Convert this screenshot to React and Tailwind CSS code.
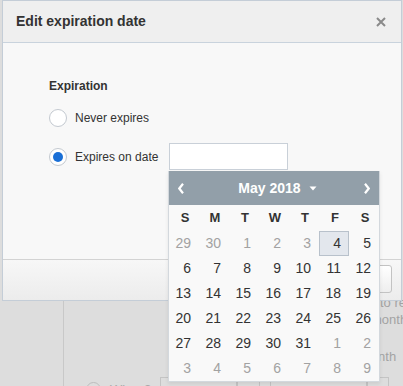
import React from "react";

const weeks = [
  [[29, 0], [30, 0], [1, 0], [2, 0], [3, 0], [4, 2], [5, 1]],
  [[6, 1], [7, 1], [8, 1], [9, 1], [10, 1], [11, 1], [12, 1]],
  [[13, 1], [14, 1], [15, 1], [16, 1], [17, 1], [18, 1], [19, 1]],
  [[20, 1], [21, 1], [22, 1], [23, 1], [24, 1], [25, 1], [26, 1]],
  [[27, 1], [28, 1], [29, 1], [30, 1], [31, 1], [1, 0], [2, 0]],
  [[3, 0], [4, 0], [5, 0], [6, 0], [7, 0], [8, 0], [9, 0]],
];

const dayNames = ["S", "M", "T", "W", "T", "F", "S"];

function Radio({ checked }) {
  return (
    <span className="w-[18px] h-[18px] shrink-0 rounded-full border border-[#c3c9d0] bg-white flex items-center justify-center">
      {checked && <span className="w-[10px] h-[10px] rounded-full bg-[#1a6fd6]" />}
    </span>
  );
}

function Calendar() {
  return (
    <div className="absolute left-[168px] top-[171px] w-[212px] border-x border-b border-[#d3d8dd] bg-[#f9f9f9] shadow-[0_2px_4px_rgba(0,0,0,0.08)]">
      <div className="h-[34px] bg-[#929fa9] flex items-center text-white">
        <span className="w-[24px] h-full flex items-center justify-center">
          <svg width="6" height="11" viewBox="0 0 6 11">
            <path d="M5 0.8 L1.3 5.5 L5 10.2" fill="none" stroke="white" strokeWidth="2.2" />
          </svg>
        </span>
        <div className="flex-1 flex items-center justify-center pl-[7px]">
          <span className="text-[14px] font-bold leading-none">May 2018</span>
          <svg className="ml-[8px]" width="8" height="5" viewBox="0 0 8 5">
            <path d="M0.5 0.5 L7.5 0.5 L4 4.5 Z" fill="white" />
          </svg>
        </div>
        <span className="w-[24px] h-full flex items-center justify-center">
          <svg width="6" height="11" viewBox="0 0 6 11">
            <path d="M1 0.8 L4.7 5.5 L1 10.2" fill="none" stroke="white" strokeWidth="2.2" />
          </svg>
        </span>
      </div>
      <div className="grid grid-cols-7 h-[26px] items-center">
        {dayNames.map((d, i) => (
          <span key={i} className="text-center pl-[2px] text-[13px] font-bold text-[#333]">
            {d}
          </span>
        ))}
      </div>
      {weeks.map((w, wi) => (
        <div key={wi} className="grid grid-cols-7">
          {w.map(([n, t], di) => (
            <span
              key={di}
              className={
                t === 2
                  ? "h-[25px] leading-[25px] text-right pr-[8px] text-[14px] text-[#333] bg-[#e3e7ed] shadow-[inset_0_0_0_1px_#b8c1cb]"
                  : t === 1
                  ? "h-[25px] leading-[25px] text-right pr-[8px] text-[14px] text-[#333]"
                  : "h-[25px] leading-[25px] text-right pr-[8px] text-[14px] text-[#a2a2a2]"
              }
            >
              {n}
            </span>
          ))}
        </div>
      ))}
    </div>
  );
}

export default function App() {
  return (
    <div className="relative w-[403px] h-[386px] overflow-hidden bg-[#dddddd] font-['Liberation_Sans',Arial,sans-serif]">
      {/* background page */}
      <div className="flex h-full">
        <div className="w-[64px] shrink-0 border-r border-[#c8c8c8]" />
        <div className="flex-1 flex flex-col pt-[294px] text-[13px] text-[#a3a3a3] whitespace-nowrap">
          <div className="h-[17px] leading-[17px] pl-[316px]">to re</div>
          <div className="h-[17px] leading-[17px] pl-[307px]">month</div>
          <div className="h-[17px] leading-[17px] pl-[296px] mt-[20px]">month</div>
          <div className="flex items-start mt-[12px] ml-[22px]">
            <span className="w-[15px] h-[15px] mt-[5px] rounded-full border border-[#bdbdbd] shrink-0" />
            <span className="w-[59px] pl-[9px] pt-[3px] text-[13px] text-[#aaa]">When?</span>
            <span className="w-[77px] h-[20px] border border-[#c4c4c4]" />
            <span className="w-[23px] h-[20px] border border-[#c4c4c4]" />
            <span className="w-[97px] h-[20px] border border-[#c4c4c4] ml-[10px]" />
            <span className="w-[22px] h-[20px] border border-[#c4c4c4]" />
          </div>
        </div>
      </div>

      {/* modal */}
      <div className="absolute left-[2px] top-0 w-[400px] h-[301px] flex flex-col border border-[#c4cdd7] bg-[#f8f8f8]">
        <div className="h-[42px] shrink-0 bg-[#efefef] border-b border-[#c9d3dd] flex items-center justify-between pl-[13px] pr-[15px]">
          <span className="text-[14px] font-bold text-[#333]">Edit expiration date</span>
          <svg width="10" height="10" viewBox="0 0 10 10">
            <path d="M1 1 L9 9 M9 1 L1 9" stroke="#8a8a8a" strokeWidth="2" />
          </svg>
        </div>
        <div className="h-[216px] shrink-0 pl-[46px] pt-[35px] text-[#333]">
          <div className="text-[12px] font-bold leading-4">Expiration</div>
          <div className="flex items-center h-[28px] mt-[10px]">
            <Radio />
            <span className="ml-[8px] text-[12px]">Never expires</span>
          </div>
          <div className="flex items-center h-[27px] mt-[11px]">
            <Radio checked />
            <span className="ml-[8px] text-[12px]">Expires on date</span>
            <span className="ml-[11px] w-[119px] h-[27px] border border-[#c9d0d8] bg-white" />
          </div>
        </div>
        <div className="flex-1 border-t border-[#d3d3d3] bg-gradient-to-b from-[#f7f7f7] to-[#ececec] flex justify-end items-start pt-[5px] pr-[9px]">
          <span className="w-[62px] h-[28px] rounded-[3px] border border-[#c3c3c3] bg-gradient-to-b from-white to-[#eeeeee]" />
        </div>
      </div>

      <Calendar />
    </div>
  );
}
